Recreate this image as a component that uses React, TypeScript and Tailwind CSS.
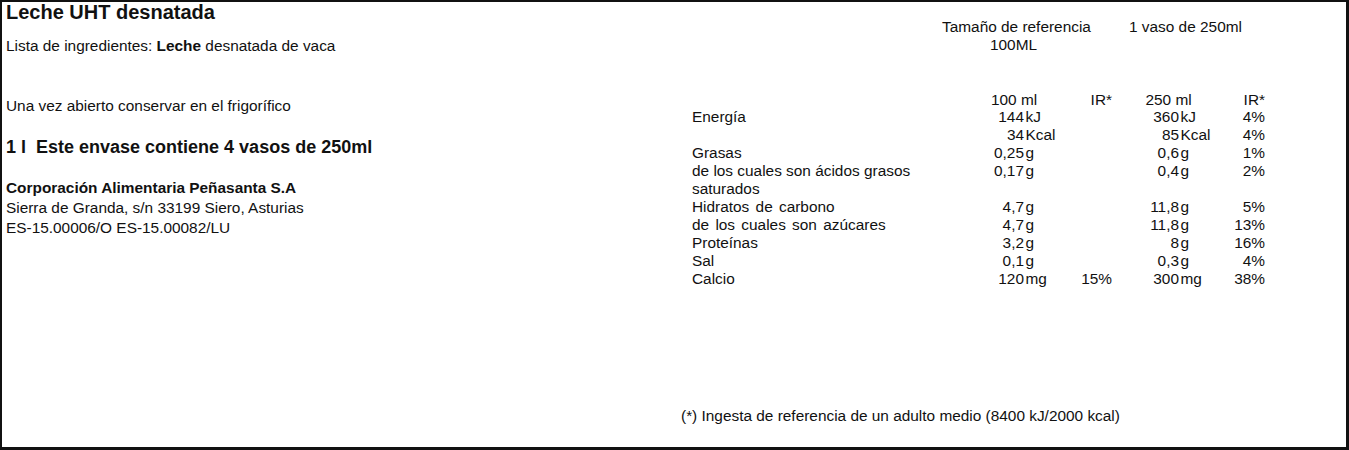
import React from 'react';

type Row = {
  label: string;
  n1?: string;
  u1?: string;
  ir1?: string;
  n2?: string;
  u2?: string;
  ir2?: string;
  spaced?: boolean;
};

const rows: Row[] = [
  { label: 'Energía', n1: '144', u1: 'kJ', n2: '360', u2: 'kJ', ir2: '4%' },
  { label: '', n1: '34', u1: 'Kcal', n2: '85', u2: 'Kcal', ir2: '4%' },
  { label: 'Grasas', n1: '0,25', u1: 'g', n2: '0,6', u2: 'g', ir2: '1%' },
  { label: 'de los cuales son ácidos grasos', n1: '0,17', u1: 'g', n2: '0,4', u2: 'g', ir2: '2%' },
  { label: 'saturados' },
  { label: 'Hidratos de carbono', n1: '4,7', u1: 'g', n2: '11,8', u2: 'g', ir2: '5%', spaced: true },
  { label: 'de los cuales son azúcares', n1: '4,7', u1: 'g', n2: '11,8', u2: 'g', ir2: '13%', spaced: true },
  { label: 'Proteínas', n1: '3,2', u1: 'g', n2: '8', u2: 'g', ir2: '16%' },
  { label: 'Sal', n1: '0,1', u1: 'g', n2: '0,3', u2: 'g', ir2: '4%' },
  { label: 'Calcio', n1: '120', u1: 'mg', ir1: '15%', n2: '300', u2: 'mg', ir2: '38%' },
];

const NutritionRow = ({ row }: { row: Row }) => (
  <div className="flex h-[18px] leading-[18px]">
    <div className={`w-[270px] whitespace-nowrap ${row.spaced ? '[word-spacing:2px]' : ''}`}>{row.label}</div>
    <div className="w-[62px] text-right">{row.n1}</div>
    <div className="w-[40px] pl-[1.5px]">{row.u1}</div>
    <div className="w-[48px] text-right">{row.ir1}</div>
    <div className="w-[67px] text-right">{row.n2}</div>
    <div className="w-[46px] pl-[1.5px]">{row.u2}</div>
    <div className="w-[40px] text-right">{row.ir2}</div>
  </div>
);

export default function App() {
  return (
    <div
      className="flex h-[450px] w-[1349px] border-t-2 border-l-2 border-r-[3px] border-b-[3px] border-[#111] bg-white text-[15.4px] text-[#111]"
      style={{ fontFamily: '"Liberation Sans", Arial, sans-serif' }}
    >
      {/* Left: product info */}
      <div className="flex w-[679px] flex-col pl-[4px]">
        <h1 className="text-[20px] font-bold leading-[20px]">Leche UHT desnatada</h1>
        <p className="mt-[15px] leading-[18px]">
          Lista de ingredientes: <span className="font-bold">Leche</span> desnatada de vaca
        </p>
        <p className="mt-[42px] leading-[18px]">Una vez abierto conservar en el frigorífico</p>
        <p className="mt-[21px] whitespace-pre text-[18px] font-bold leading-[22px]">1 l  Este envase contiene 4 vasos de 250ml</p>
        <div className="mt-[20px] leading-[20px]">
          <p className="font-bold">Corporación Alimentaria Peñasanta S.A</p>
          <p>Sierra de Granda, s/n 33199 Siero, Asturias</p>
          <p>ES-15.00006/O ES-15.00082/LU</p>
        </div>
      </div>

      {/* Right: nutrition table */}
      <div className="flex flex-1 flex-col pt-[16px] pb-[22px]">
        <div className="ml-[261px] flex leading-[18px]">
          <div className="w-[187px]">
            <p>Tamaño de referencia</p>
            <p className="pl-[48px]">100ML</p>
          </div>
          <p>1 vaso de 250ml</p>
        </div>

        <div className="mt-[38px] ml-[11px]">
          <div className="flex h-[16px] leading-[16px]">
            <div className="w-[270px]" />
            <div className="w-[102px] pl-[29px]">100 ml</div>
            <div className="w-[48px] text-right">IR*</div>
            <div className="w-[113px] pl-[33.5px]">250 ml</div>
            <div className="w-[40px] text-right">IR*</div>
          </div>
          {rows.map((r, i) => (
            <NutritionRow key={i} row={r} />
          ))}
        </div>

        <p className="mt-auto leading-[18px]">(*) Ingesta de referencia de un adulto medio (8400 kJ/2000 kcal)</p>
      </div>
    </div>
  );
}
